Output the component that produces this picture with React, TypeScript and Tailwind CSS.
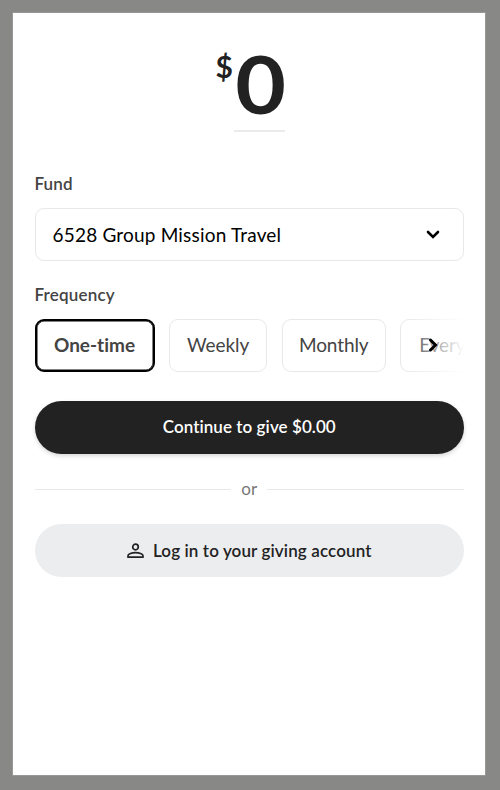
import React, { useState } from "react";

const frequencies = [
  { label: "One-time", width: "w-[120px]" },
  { label: "Weekly", width: "w-[98px]" },
  { label: "Monthly", width: "w-[104px]" },
  { label: "Every 2 weeks", width: "w-[156px]" },
];

const App = () => {
  const [frequency, setFrequency] = useState("One-time");

  return (
    <div className="h-[790px] w-[500px] bg-[#888886] pt-[13px] pl-[13px] font-['Lato',sans-serif] [font-variant-ligatures:none]">
      <main className="h-[761.5px] w-[472px] bg-white px-[21.5px] pt-[35px] outline outline-[#979795]">
        <div className="flex h-[84px] justify-center pl-[2px]">
          <span className="w-[18px] text-[30px] leading-[36px] font-bold text-[#222]">
            $
          </span>
          <div className="h-[84px] w-[51px] border-b-2 border-[#ebebeb] text-center text-[81px] leading-[70px] font-bold text-[#222]">
            <span className="inline-block origin-center scale-x-108 pl-[3px]">0</span>
          </div>
        </div>

        <label className="mt-[41px] block h-[22px] text-[17px] leading-[22px] font-semibold tracking-[0.1px] text-[#444]">
          Fund
        </label>
        <button className="mt-[12.5px] flex h-[53px] w-[429.5px] items-center justify-between rounded-[9px] border border-[#e8e8e8] pt-px pr-[23px] pl-[17px] text-[19px] tracking-[0.19px] text-black">
          <span className="pt-px">6528 Group Mission Travel</span>
          <svg width="14" height="10" viewBox="0 0 14 10" fill="none">
            <path d="M2 2 7 7 12 2" stroke="#000" strokeWidth="2.6" strokeLinecap="round" />
          </svg>
        </button>

        <div className="mt-[23.5px] h-[22px] text-[17px] leading-[22px] font-semibold tracking-[0.2px] text-[#444]">
          Frequency
        </div>
        <div className="relative mt-[12.5px] w-[429.5px] overflow-hidden">
          <div className="flex gap-[14.6px]">
            {frequencies.map((item) => (
              <button
                key={item.label}
                onClick={() => setFrequency(item.label)}
                className={`h-[53px] shrink-0 rounded-[9px] text-[19px] whitespace-nowrap text-[#444] ${item.width} ${
                  frequency === item.label
                    ? "border-2 border-black font-bold shadow-[inset_0_0_0_0.5px_#000]"
                    : "border border-[#e8e8e8] tracking-[-0.1px]"
                }`}
              >
                {item.label}
              </button>
            ))}
          </div>
          <div className="absolute top-0 right-0 flex h-full w-[61px] items-center bg-linear-to-r from-white/0 to-white pl-[25px]">
            <svg width="12" height="14" viewBox="0 0 12 14" fill="none">
              <path d="M2.5 2 7.5 7 2.5 12" stroke="#000" strokeWidth="3" strokeLinecap="round" />
            </svg>
          </div>
        </div>

        <button className="mt-[29px] block h-[53px] w-[429.5px] rounded-full bg-[#222] text-[17px] font-semibold tracking-[0.07px] text-white shadow-[0_2px_4px_rgba(0,0,0,0.16)]">
          Continue to give $0.00
        </button>

        <div className="mt-[24.5px] flex h-[22px] w-[429.5px] items-center gap-[10px] text-[17px] text-[#777]">
          <div className="h-px flex-1 bg-[#e8e8e8]" />
          <span>or</span>
          <div className="h-px flex-1 bg-[#e8e8e8]" />
        </div>

        <button className="mt-[24px] flex h-[53px] w-[429.5px] items-center justify-center gap-[9px] rounded-full bg-[#ecedef] text-[17px] font-semibold tracking-[0.12px] text-[#222]">
          <svg width="17" height="16" viewBox="0 0 17 16" fill="none" stroke="#222" strokeWidth="1.7">
            <circle cx="8.5" cy="4" r="2.8" />
            <path d="M1 14.2v-1.4C1 10.8 5 9.7 8.5 9.7s7.5 1.1 7.5 3.1v1.4Z" strokeLinejoin="round" />
          </svg>
          <span>Log in to your giving account</span>
        </button>
      </main>
    </div>
  );
};

export default App;
